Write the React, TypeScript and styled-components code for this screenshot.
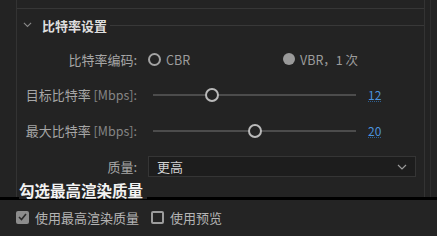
import React from "react";
import styled, { createGlobalStyle } from "styled-components";

const GlobalStyle = createGlobalStyle`
  html, body {
    margin: 0;
    padding: 0;
    background: #232323;
  }
  body {
    font-family: "Noto Sans CJK SC", "Noto Sans", sans-serif;
  }
`;

const Screen = styled.div`
  width: 437px;
  height: 236px;
  display: flex;
  flex-direction: column;
  background: #232323;
  overflow: hidden;
`;

const Upper = styled.div`
  position: relative;
  height: 197px;
  display: flex;
`;

const Gutter = styled.div`
  width: 16px;
  flex: none;
`;

const Panel = styled.div`
  width: 407px;
  border-left: 1px solid #333;
  border-right: 1px solid #333;
  display: flex;
  flex-direction: column;
`;

const ScrollEdge = styled.div`
  width: 5px;
  flex: none;
  border-right: 1px solid #2e2e2e;
`;

const TopStub = styled.div`
  height: 8px;
  border-bottom: 1px solid #363636;
`;

const SectionHeader = styled.div`
  height: 32px;
  display: flex;
  align-items: center;
  padding-left: 6px;
`;

const Title = styled.span`
  margin-left: 10px;
  font-size: 13px;
  font-weight: 700;
  color: #dedede;
  line-height: 1;
`;

const Rule = styled.div`
  flex: 1;
  height: 1px;
  background: #383838;
  margin-left: 3px;
  margin-top: 1px;
`;

const Row = styled.div<{ $h: number }>`
  height: ${({ $h }) => $h}px;
  display: flex;
  align-items: center;
`;

const Label = styled.div`
  width: 120px;
  text-align: right;
  font-size: 13px;
  color: #a6a6a6;
  white-space: nowrap;
  line-height: 1;
`;

const Unit = styled.span`
  color: #858585;
  font-size: 12.5px;
`;

const Control = styled.div`
  flex: 1;
  margin-left: 11px;
  margin-right: 8px;
  display: flex;
  align-items: center;
`;

const RadioGroup = styled.div`
  flex: 1;
  display: grid;
  grid-template-columns: 135px 1fr;
`;

const RadioOption = styled.div`
  display: flex;
  align-items: center;
  gap: 5px;
  font-size: 12.5px;
  color: #9c9c9c;
`;

const RadioDot = styled.span<{ $checked?: boolean }>`
  width: ${({ $checked }) => ($checked ? 12 : 9)}px;
  height: ${({ $checked }) => ($checked ? 12 : 9)}px;
  border-radius: 50%;
  border: ${({ $checked }) => ($checked ? "0" : "2px solid #a3a3a3")};
  background: ${({ $checked }) => ($checked ? "#9a9a9a" : "transparent")};
  flex: none;
`;

const SliderWrap = styled.div`
  width: 203px;
  margin-left: 5px;
  position: relative;
  height: 14px;
  display: flex;
  align-items: center;
`;

const Track = styled.div`
  width: 100%;
  height: 2px;
  background: #4c4c4c;
`;

const Thumb = styled.span`
  position: absolute;
  top: 0;
  width: 10px;
  height: 10px;
  margin-left: -7px;
  border-radius: 50%;
  border: 2px solid #b9b9b9;
  background: #232323;
`;

const Value = styled.span`
  margin-left: 12px;
  font-size: 12px;
  color: #4b92dd;
  border-bottom: 1px dotted #2f5f90;
  line-height: 13px;
`;

const Select = styled.div`
  flex: 1;
  height: 19px;
  background: #1d1d1d;
  border: 1px solid #353535;
  display: flex;
  align-items: center;
  justify-content: space-between;
  padding: 0 8px 0 8px;
  font-size: 13px;
  color: #d2d2d2;
`;

const Caption = styled.div`
  position: absolute;
  left: 19px;
  top: 181px;
  padding-right: 4px;
  background: #232323;
  font-size: 15.5px;
  font-weight: 700;
  color: #f2f2f2;
  line-height: 18px;
`;

const Divider = styled.div`
  height: 3px;
  background: #000;
  flex: none;
`;

const Footer = styled.div`
  flex: 1;
  background: #242424;
  display: flex;
  align-items: center;
  padding-left: 16px;
  padding-bottom: 2px;
  gap: 12px;
`;

const CheckItem = styled.label`
  display: flex;
  align-items: center;
  gap: 6px;
  font-size: 13px;
  color: #b4b4b4;
`;

const Box = styled.span<{ $checked?: boolean }>`
  width: ${({ $checked }) => ($checked ? 13 : 9)}px;
  height: ${({ $checked }) => ($checked ? 13 : 9)}px;
  border-radius: 2px;
  border: ${({ $checked }) => ($checked ? "0" : "2px solid #9c9c9c")};
  background: ${({ $checked }) => ($checked ? "#8c8c8c" : "transparent")};
  display: flex;
  align-items: center;
  justify-content: center;
  flex: none;
`;

const Chevron = ({ size = 9, color = "#8a8a8a" }: { size?: number; color?: string }) => (
  <svg width={size} height={size * 0.6} viewBox="0 0 10 6">
    <path d="M1 1 L5 5 L9 1" fill="none" stroke={color} strokeWidth="1.2" />
  </svg>
);

const Slider = ({ value, max }: { value: number; max: number }) => (
  <>
    <SliderWrap>
      <Track />
      <Thumb style={{ left: `${(value / max) * 100}%` }} />
    </SliderWrap>
    <Value>{value}</Value>
  </>
);

export default function App() {
  return (
    <Screen>
      <GlobalStyle />
      <Upper>
        <Gutter />
        <Panel>
          <TopStub />
          <SectionHeader>
            <Chevron />
            <Title>比特率设置</Title>
            <Rule />
          </SectionHeader>
          <Row $h={36}>
            <Label>比特率编码:</Label>
            <Control>
              <RadioGroup>
                <RadioOption>
                  <RadioDot />
                  CBR
                </RadioOption>
                <RadioOption>
                  <RadioDot $checked />
                  VBR，1 次
                </RadioOption>
              </RadioGroup>
            </Control>
          </Row>
          <Row $h={36}>
            <Label>
              目标比特率 <Unit>[Mbps]:</Unit>
            </Label>
            <Control>
              <Slider value={12} max={41} />
            </Control>
          </Row>
          <Row $h={36}>
            <Label>
              最大比特率 <Unit>[Mbps]:</Unit>
            </Label>
            <Control>
              <Slider value={20} max={40} />
            </Control>
          </Row>
          <Row $h={35}>
            <Label>质量:</Label>
            <Control>
              <Select>
                <span>更高</span>
                <Chevron size={10} color="#9a9a9a" />
              </Select>
            </Control>
          </Row>
        </Panel>
        <ScrollEdge />
        <Caption>勾选最高渲染质量</Caption>
      </Upper>
      <Divider />
      <Footer>
        <CheckItem>
          <Box $checked>
            <svg width="9" height="8" viewBox="0 0 9 8">
              <path d="M1 4 L3.5 6.5 L8 1" fill="none" stroke="#2a2a2a" strokeWidth="1.6" />
            </svg>
          </Box>
          使用最高渲染质量
        </CheckItem>
        <CheckItem>
          <Box />
          使用预览
        </CheckItem>
      </Footer>
    </Screen>
  );
}
